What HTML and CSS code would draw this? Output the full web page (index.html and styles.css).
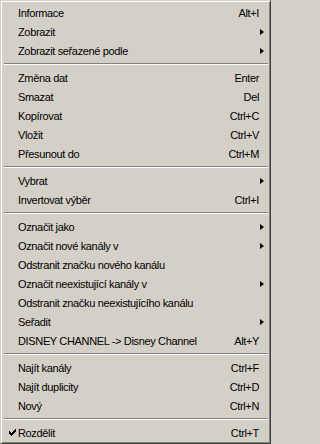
FILE: index.html
```html
<!DOCTYPE html>
<html>
<head>
<meta charset="utf-8">
<link rel="stylesheet" href="styles.css">
</head>
<body>
<div class="menu">
  <div class="item"><span class="gutter"></span><span class="label">Informace</span><span class="key">Alt+I</span><span class="sub"></span></div>
  <div class="item"><span class="gutter"></span><span class="label">Zobrazit</span><span class="key"></span><span class="sub"><i class="arrow"></i></span></div>
  <div class="item"><span class="gutter"></span><span class="label">Zobrazit seřazené podle</span><span class="key"></span><span class="sub"><i class="arrow"></i></span></div>
  <div class="sep"></div>
  <div class="item"><span class="gutter"></span><span class="label">Změna dat</span><span class="key">Enter</span><span class="sub"></span></div>
  <div class="item"><span class="gutter"></span><span class="label">Smazat</span><span class="key">Del</span><span class="sub"></span></div>
  <div class="item"><span class="gutter"></span><span class="label">Kopírovat</span><span class="key">Ctrl+C</span><span class="sub"></span></div>
  <div class="item"><span class="gutter"></span><span class="label">Vložit</span><span class="key">Ctrl+V</span><span class="sub"></span></div>
  <div class="item"><span class="gutter"></span><span class="label">Přesunout do</span><span class="key">Ctrl+M</span><span class="sub"></span></div>
  <div class="sep"></div>
  <div class="item"><span class="gutter"></span><span class="label">Vybrat</span><span class="key"></span><span class="sub"><i class="arrow"></i></span></div>
  <div class="item"><span class="gutter"></span><span class="label">Invertovat výběr</span><span class="key">Ctrl+I</span><span class="sub"></span></div>
  <div class="sep"></div>
  <div class="item"><span class="gutter"></span><span class="label">Označit jako</span><span class="key"></span><span class="sub"><i class="arrow"></i></span></div>
  <div class="item"><span class="gutter"></span><span class="label">Označit nové kanály v</span><span class="key"></span><span class="sub"><i class="arrow"></i></span></div>
  <div class="item"><span class="gutter"></span><span class="label">Odstranit značku nového kanálu</span><span class="key"></span><span class="sub"></span></div>
  <div class="item"><span class="gutter"></span><span class="label">Označit neexistující kanály v</span><span class="key"></span><span class="sub"><i class="arrow"></i></span></div>
  <div class="item"><span class="gutter"></span><span class="label">Odstranit značku neexistujícího kanálu</span><span class="key"></span><span class="sub"></span></div>
  <div class="item"><span class="gutter"></span><span class="label">Seřadit</span><span class="key"></span><span class="sub"><i class="arrow"></i></span></div>
  <div class="item"><span class="gutter"></span><span class="label">DISNEY CHANNEL -&gt; Disney Channel</span><span class="key">Alt+Y</span><span class="sub"></span></div>
  <div class="sep"></div>
  <div class="item"><span class="gutter"></span><span class="label">Najít kanály</span><span class="key">Ctrl+F</span><span class="sub"></span></div>
  <div class="item"><span class="gutter"></span><span class="label">Najít duplicity</span><span class="key">Ctrl+D</span><span class="sub"></span></div>
  <div class="item"><span class="gutter"></span><span class="label">Nový</span><span class="key">Ctrl+N</span><span class="sub"></span></div>
  <div class="sep"></div>
  <div class="item"><span class="gutter"><svg class="check" width="7" height="7" viewBox="0 0 7 7"><path d="M0 2h1v1h1v1h1v-1h1v-1h1v-1h1v-1h1v3h-1v1h-1v1h-1v1h-1v1h-1v-1h-1v-1h-1v-1h-1z" fill="#000"/></svg></span><span class="label">Rozdělit</span><span class="key">Ctrl+T</span><span class="sub"></span></div>
</div>
</body>
</html>
```

FILE: styles.css
```css
html, body {
  margin: 0;
  padding: 0;
  background: #d4d0c8;
}

.menu {
  box-sizing: border-box;
  width: 271px;
  height: 444px;
  background: #d4d0c8;
  border-top: 1px solid #d4d0c8;
  border-left: 1px solid #d4d0c8;
  border-right: 1px solid #404040;
  border-bottom: 1px solid #404040;
  box-shadow: inset 1px 1px 0 #ffffff, inset -1px -1px 0 #808080;
  padding: 2px 1px 1px 2px;
  font-family: "Liberation Sans", Arial, sans-serif;
  font-size: 11px;
  letter-spacing: -0.35px;
  color: #000;
  display: flex;
  flex-direction: column;
}

.item {
  height: 19px;
  display: flex;
  align-items: center;
  white-space: nowrap;
}

.gutter {
  width: 15px;
  flex: none;
  display: flex;
  align-items: center;
  padding-left: 6px;
  box-sizing: border-box;
}

.check {
  display: block;
}

.label {
  flex: 1;
}

.key {
  flex: none;
}

.sub {
  width: 10px;
  flex: none;
  display: flex;
  align-items: center;
  padding-left: 1px;
  box-sizing: border-box;
}

.arrow {
  display: block;
  width: 0;
  height: 0;
  border-top: 3.5px solid transparent;
  border-bottom: 3.5px solid transparent;
  border-left: 4px solid #000;
}

.sep {
  height: 8px;
  margin: 0 1px;
  box-sizing: border-box;
  padding-top: 3px;
}

.sep::before {
  content: "";
  display: block;
  height: 1px;
  background: #808080;
  border-bottom: 1px solid #ffffff;
}
```
